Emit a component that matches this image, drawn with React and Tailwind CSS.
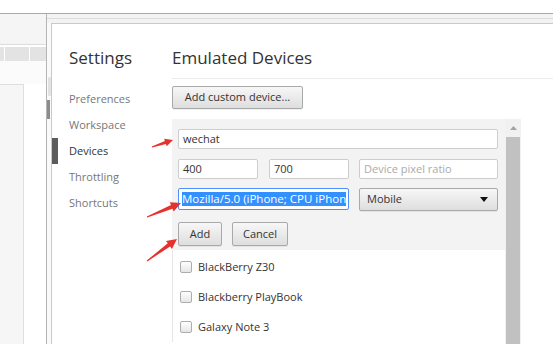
import React from "react";

const arrow = (tx, ty, hx, hy, head = 9, hw = 4.5, sw = 1.6) => {
  const dx = hx - tx;
  const dy = hy - ty;
  const len = Math.hypot(dx, dy);
  const ux = dx / len;
  const uy = dy / len;
  const nx = -uy;
  const ny = ux;
  const bx = hx - ux * head;
  const by = hy - uy * head;
  const pts = [
    [tx + nx * 0.5, ty + ny * 0.5],
    [bx + nx * sw, by + ny * sw],
    [bx + nx * hw, by + ny * hw],
    [hx, hy],
    [bx - nx * hw, by - ny * hw],
    [bx - nx * sw, by - ny * sw],
    [tx - nx * 0.5, ty - ny * 0.5],
  ];
  return pts.map((p) => p.map((v) => v.toFixed(1)).join(",")).join(" ");
};

const Btn = ({ children, className = "" }) => (
  <div
    className={
      "flex items-center justify-center rounded-[2px] border border-[#a9a9a9] bg-gradient-to-b from-[#f7f7f7] to-[#dedede] text-[#333] shadow-[0_1px_0_rgba(0,0,0,0.06)] " +
      className
    }
  >
    {children}
  </div>
);

const Field = ({ children, className = "", placeholder }) => (
  <div
    className={
      "flex items-center rounded-[2px] border border-[#cdcdcd] bg-white pl-[4px] " +
      (placeholder ? "text-[#aaa] " : "text-[#333] ") +
      className
    }
  >
    {children}
  </div>
);

const Check = ({ label }) => (
  <div className="flex h-[30px] items-center pl-[7px]">
    <div className="h-[12px] w-[12px] rounded-[2px] border border-[#adadad] bg-gradient-to-b from-white to-[#e6e6e6]" />
    <span className="ml-[6px] text-[#333]">{label}</span>
  </div>
);

const navItems = ["Preferences", "Workspace", "Devices", "Throttling", "Shortcuts"];

export default function App() {
  return (
    <div className="relative h-[344px] w-[553px] overflow-hidden bg-white font-['Open_Sans',sans-serif] text-[11px]">
      <div className="h-[13px] bg-white" />
      <div className="h-px bg-[#a9a9a9]" />
      <div className="flex h-[330px] overflow-hidden">
        {/* left strip of the page behind */}
        <div className="flex w-[47px] shrink-0 flex-col border-r border-[#b5b5b5]">
          <div className="h-[31px] shrink-0 border-b border-[#dcdcdc] bg-[#f5f5f5]" />
          <div className="mt-[2px] flex h-[14px] shrink-0 bg-[#e3e3e3]">
            <div className="w-[4px]" />
            <div className="w-px bg-white" />
            <div className="w-[24px]" />
            <div className="w-px bg-white" />
          </div>
          <div className="h-[23px] shrink-0 bg-[#fbfbfb]" />
          <div className="flex flex-1">
            <div className="w-[24px] border-r border-t border-[#dedede] bg-[#f6f6f6]" />
            <div className="flex-1 bg-white" />
          </div>
        </div>

        <div className="flex min-w-0 flex-1 flex-col">
          <div className="flex h-[9px] shrink-0 flex-col justify-center bg-[#f3f3f3]">
            <div className="h-px bg-[#dcdcdc]" />
          </div>
          <div className="flex min-h-0 flex-1 overflow-hidden">
            <div className="flex w-[4px] shrink-0 flex-col bg-[#fafafa]">
              <div className="ml-[1px] mt-[54px] h-[19px] w-[3px] rounded-[1px] bg-[#e2e2e2]" />
              <div className="mt-[4px] h-[19px] w-[3px] bg-[#8c8c8c]" />
            </div>

            {/* settings dialog */}
            <div className="flex flex-1 overflow-hidden border-l border-t border-[#c9c9c9] bg-white">
              <div className="w-[120px] shrink-0 pt-[22px]">
                <div className="pl-[17px] text-[17px] leading-[24px] text-[#333]">Settings</div>
                <div className="mt-[16px]">
                  {navItems.map((item) => (
                    <div key={item} className="flex h-[26px] items-center">
                      <div className={"h-full w-[6px] " + (item === "Devices" ? "bg-[#5c5c5c]" : "")} />
                      <span className={"pl-[11px] " + (item === "Devices" ? "text-[#333]" : "text-[#777]")}>
                        {item}
                      </span>
                    </div>
                  ))}
                </div>
              </div>

              <div className="flex-1 pt-[22px]">
                <div className="border-b border-[#ececec] pb-[8px] text-[17px] leading-[24px] text-[#333]">
                  Emulated Devices
                </div>
                <Btn className="mt-[7px] h-[23px] w-[131px]">Add custom device...</Btn>

                <div className="mt-[10px] flex w-[350px]">
                  <div className="w-[333px]">
                    <div className="bg-[#f3f3f3] pb-[4px] pl-[6px] pr-[7px] pt-[10px]">
                      <Field className="h-[20px] w-[320px]">wechat</Field>
                      <div className="mt-[10px] flex h-[20px]">
                        <Field className="w-[80px]">400</Field>
                        <Field className="ml-[11px] w-[80px]">700</Field>
                        <Field className="ml-[10px] w-[139px]" placeholder>
                          Device pixel ratio
                        </Field>
                      </div>
                      <div className="mt-[9px] flex h-[22px]">
                        <div className="flex w-[171px] items-center overflow-hidden rounded-[2px] border border-[#4d90fe] bg-white pl-[3px] pr-[2px]">
                          <span className="flex-1 overflow-hidden whitespace-nowrap bg-[#3390ff] text-[11.5px] leading-[14px] text-white">
                            Mozilla/5.0 (iPhone; CPU iPhon
                          </span>
                        </div>
                        <Btn className="ml-[10px] h-[23px] w-[139px] !justify-between pl-[7px] pr-[9px]">
                          <span>Mobile</span>
                          <svg width="8" height="5" viewBox="0 0 8 5">
                            <path d="M0 0h8L4 5z" fill="#111" />
                          </svg>
                        </Btn>
                      </div>
                      <div className="mt-[12px] flex h-[24px]">
                        <Btn className="w-[44px]">Add</Btn>
                        <Btn className="ml-[10px] w-[56px]">Cancel</Btn>
                      </div>
                    </div>
                    <div className="border-l border-[#e6e6e6] pt-[2px]">
                      <Check label="BlackBerry Z30" />
                      <Check label="Blackberry PlayBook" />
                      <Check label="Galaxy Note 3" />
                    </div>
                  </div>
                  <div className="flex h-[240px] w-[16px] flex-col bg-[#f1f1f1]">
                    <div className="flex h-[18px] items-center justify-center">
                      <svg width="7" height="4" viewBox="0 0 7 4">
                        <path d="M0 4L3.5 0L7 4z" fill="#a3a3a3" />
                      </svg>
                    </div>
                    <div className="mx-[1px] flex-1 bg-[#c1c1c1]" />
                  </div>
                </div>
              </div>
            </div>
          </div>
        </div>
      </div>

      <svg className="pointer-events-none absolute inset-0" width="553" height="344">
        <polygon points={arrow(152, 147, 173, 140, 8, 4)} fill="#e5322d" />
        <polygon points={arrow(147, 217, 181, 203, 10, 5, 2)} fill="#e5322d" />
        <polygon points={arrow(147, 261, 177, 239, 10, 5, 2)} fill="#e5322d" />
      </svg>
    </div>
  );
}
